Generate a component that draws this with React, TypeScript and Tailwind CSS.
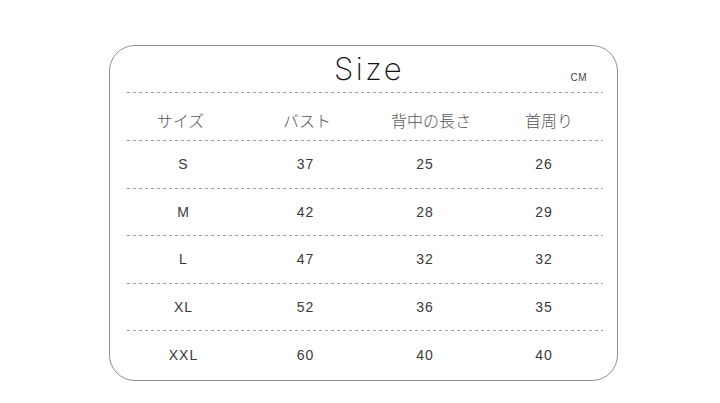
const rows = [
  ['S', '37', '25', '26'],
  ['M', '42', '28', '29'],
  ['L', '47', '32', '32'],
  ['XL', '52', '36', '35'],
  ['XXL', '60', '40', '40'],
];

const rowHeights = ['h-[47px]', 'h-[46px]', 'h-[47px]', 'h-[46px]', 'h-[48px]'];

const headers = ['サイズ', 'バスト', '背中の長さ', '首周り'];

const Dashed = () => (
  <div className="h-px w-full bg-[repeating-linear-gradient(90deg,#a0a0a0_0_3px,transparent_3px_6px)]" />
);

export default function App() {
  return (
    <div className="w-[720px] h-[403px] bg-white pt-[45px] pl-[109px]">
      <div className="w-[509px] h-[336px] border border-[#8f8f8f] rounded-[26px] pl-[17px] pr-[14px] flex flex-col">
        <div className="h-[46px] grid grid-cols-[1fr_auto_1fr] items-end">
          <div />
          <div className="font-['Inter',sans-serif] font-extralight text-[31px] leading-none tracking-[2.5px] text-[#111] pb-[8px] pl-[8px]">
            Size
          </div>
          <div className="flex justify-end pb-[7px] pr-[16px] font-['Liberation_Sans',sans-serif] text-[10px] text-[#444] tracking-[0.5px]">
            CM
          </div>
        </div>
        <Dashed />
        <div className="h-[47px] grid grid-cols-[107px_146px_102px_134px] items-center pt-[6px] font-['Noto_Sans_CJK_JP',sans-serif] font-light text-[16px] text-[#555]">
          {headers.map((h) => (
            <div key={h} className="text-center">
              {h}
            </div>
          ))}
        </div>
        {rows.map((r, i) => (
          <div key={r[0]} className="flex flex-col">
            <Dashed />
            <div
              className={`grid grid-cols-[113px_131px_108px_130px] items-center font-['Liberation_Sans',sans-serif] text-[14px] tracking-[1px] text-[#3a3a3a] ${rowHeights[i]}`}
            >
              {r.map((c, j) => (
                <div key={j} className="text-center">
                  {c}
                </div>
              ))}
            </div>
          </div>
        ))}
      </div>
    </div>
  );
}
